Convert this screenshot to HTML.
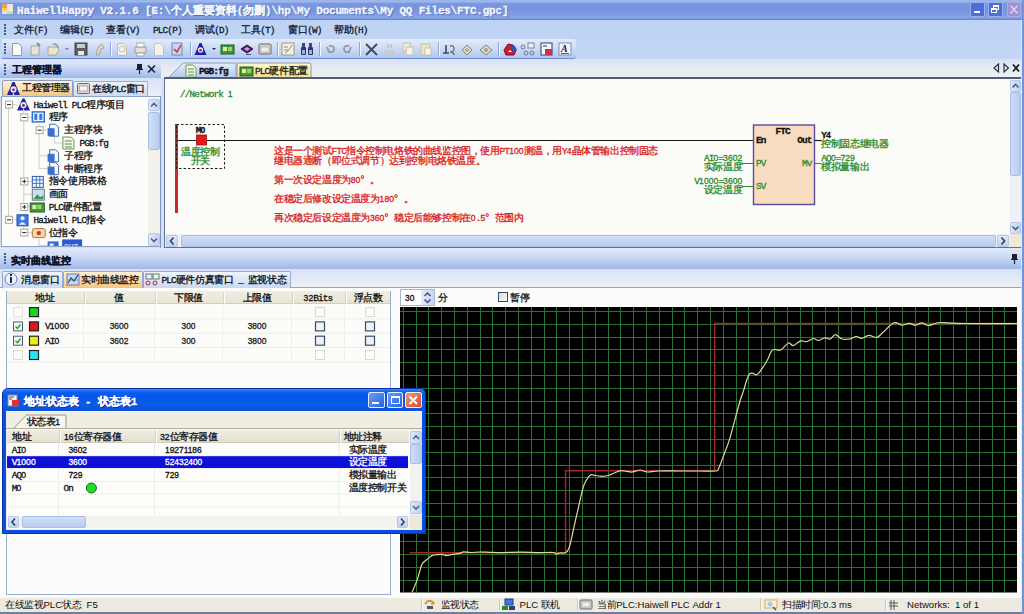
<!DOCTYPE html><html><head><meta charset="utf-8"><style>
*{margin:0;padding:0;box-sizing:border-box}
html,body{width:1024px;height:614px;overflow:hidden;background:#fbfbf8;font-family:"Liberation Sans",sans-serif;position:relative}
body>div, .abs{position:absolute}
.t{white-space:nowrap;-webkit-text-stroke:0.3px currentColor}
.a{font-family:"Liberation Mono",monospace;font-size:9.4px;letter-spacing:-0.84px}
.ab{font-family:"Liberation Mono",monospace;font-size:9.4px;letter-spacing:-0.84px;font-weight:bold}
.tt{font-family:"Liberation Mono",monospace;font-size:11px;font-weight:bold;letter-spacing:-0.2px}
.s{font-family:"Liberation Sans",sans-serif;font-size:9.6px;letter-spacing:0}
.d{font-family:"Liberation Sans",sans-serif;font-size:8.6px;letter-spacing:0.02px}
.n{font-family:"Liberation Sans",sans-serif;font-size:8.4px;letter-spacing:0}
svg{position:absolute;left:0;top:0}
</style></head><body><div style="left:0px;top:0px;width:1024px;height:20px;background:linear-gradient(#9cb5ea 0,#9cb5ea 2px,#7a98e0 3.5px,#7593df 9px,#7e9de3 15px,#88a6e8 18px,#6a88cc 19px,#6a88cc 20px)"></div>
<svg width="1024" height="20" style="left:0;top:0"><rect x="2" y="4" width="5" height="4" fill="#f0a050"/><rect x="7" y="4" width="6" height="4" fill="#e8e8f0"/><rect x="2" y="8" width="5" height="3" fill="#f8d070"/><rect x="7" y="8" width="6" height="3" fill="#f0f0c0"/><rect x="2" y="11" width="5" height="3" fill="#e0e0f0"/><rect x="7" y="11" width="6" height="3" fill="#c8e0a0"/></svg>
<div class="t" style="left:17px;top:2.0px;line-height:16px;height:16px;font-size:11px;color:#f4f6fc;font-weight:bold;text-shadow:1px 1px 0 #5570b8;"><span class="tt">HaiwellHappy&nbsp;V2.1.6&nbsp;[E:\</span>个人重要资料<span class="tt">(</span>勿删<span class="tt">)\hp\My&nbsp;Documents\My&nbsp;QQ&nbsp;Files\FTC.gpc]</span></div>
<div style="left:970px;top:2px;width:15px;height:15px;background:#4a6fd6;border:1px solid #9ab0ec;border-radius:2px"></div>
<div style="left:974px;top:11px;width:6px;height:2px;background:#fff"></div>
<div style="left:988px;top:2px;width:15px;height:15px;background:#4a6fd6;border:1px solid #9ab0ec;border-radius:2px"></div>
<div style="left:993px;top:5px;width:6px;height:5px;border:1px solid #fff;border-top-width:2px"></div>
<div style="left:991px;top:8px;width:6px;height:5px;border:1px solid #fff;border-top-width:2px;background:#4a6fd6"></div>
<div style="left:1007px;top:2px;width:14px;height:15px;background:#9d93d4;border:1px solid #b0a8e0;border-radius:2px"></div>
<svg width="14" height="15" style="left:1007px;top:2px"><path d="M3.5 3.5 L10.5 11.5 M10.5 3.5 L3.5 11.5" stroke="#d8d0f0" stroke-width="1.6"/></svg>
<div style="left:1021px;top:20px;width:1px;height:592px;background:#dceafa"></div>
<div style="left:1022px;top:0px;width:2px;height:614px;background:#7094da"></div>
<div style="left:0px;top:20px;width:1021px;height:39px;background:linear-gradient(#bdd2f5,#c0d4f4 20px,#c4d6f4 39px)"></div>
<div style="left:4px;top:24px;width:2px;height:2px;background:#3b5a9c"></div>
<div style="left:4px;top:27px;width:2px;height:2px;background:#3b5a9c"></div>
<div style="left:4px;top:30px;width:2px;height:2px;background:#3b5a9c"></div>
<div style="left:4px;top:33px;width:2px;height:2px;background:#3b5a9c"></div>
<div class="t" style="left:14px;top:22.5px;line-height:14px;height:14px;font-size:10px;color:#101830;letter-spacing:-0.4px;">文件<span class="a">(F)</span></div>
<div class="t" style="left:60px;top:22.5px;line-height:14px;height:14px;font-size:10px;color:#101830;letter-spacing:-0.4px;">编辑<span class="a">(E)</span></div>
<div class="t" style="left:106px;top:22.5px;line-height:14px;height:14px;font-size:10px;color:#101830;letter-spacing:-0.4px;">查看<span class="a">(V)</span></div>
<div class="t" style="left:153px;top:22.5px;line-height:14px;height:14px;font-size:10px;color:#101830;letter-spacing:-0.4px;"><span class="a">PLC(P)</span></div>
<div class="t" style="left:195px;top:22.5px;line-height:14px;height:14px;font-size:10px;color:#101830;letter-spacing:-0.4px;">调试<span class="a">(D)</span></div>
<div class="t" style="left:241px;top:22.5px;line-height:14px;height:14px;font-size:10px;color:#101830;letter-spacing:-0.4px;">工具<span class="a">(T)</span></div>
<div class="t" style="left:288px;top:22.5px;line-height:14px;height:14px;font-size:10px;color:#101830;letter-spacing:-0.4px;">窗口<span class="a">(W)</span></div>
<div class="t" style="left:334px;top:22.5px;line-height:14px;height:14px;font-size:10px;color:#101830;letter-spacing:-0.4px;">帮助<span class="a">(H)</span></div>
<div style="left:2px;top:39px;width:574px;height:20px;background:linear-gradient(#e3ecfb,#cfdcf6 45%,#b1c8ef 100%);border-radius:0 3px 3px 0;border-bottom:1px solid #6f8cd0"></div>
<div style="left:4px;top:43px;width:2px;height:2px;background:#3b5a9c"></div>
<div style="left:4px;top:46px;width:2px;height:2px;background:#3b5a9c"></div>
<div style="left:4px;top:49px;width:2px;height:2px;background:#3b5a9c"></div>
<div style="left:4px;top:52px;width:2px;height:2px;background:#3b5a9c"></div>
<svg width="1024" height="614"><path d="M12.5 43.5 h6 l3 3 v9 h-9 z" fill="#fbfbf7" stroke="#9a9a9a" stroke-width="1"/><rect x="31" y="46" width="8" height="9" fill="#e8e4d8" stroke="#a8a49a"/><path d="M37 43 l3 3" stroke="#8a8a8a" stroke-width="2"/><path d="M48 47 h9 l2 3 l-3 5 h-8 z" fill="#ece6d0" stroke="#aaa595"/><path d="M53 44 q5 0 5 4" stroke="#9a9a9a" fill="none" stroke-width="1.5"/><path d="M65 48 h4 l-2 2 z" fill="#707a90"/><rect x="75" y="43" width="12" height="12" fill="#5a5e62" stroke="#40444a"/><rect x="77" y="44" width="8" height="4" fill="#c8ccd0"/><rect x="78" y="51" width="6" height="4" fill="#e8e8e8"/><path d="M96 55 l2 -8 l4 -3 l2 4 l-3 1 l-2 6 z" fill="#ddd8c8" stroke="#a8a496"/><rect x="110" y="42" width="1" height="14" fill="#8ea6d6"/><rect x="111" y="42" width="1" height="14" fill="#f4f8ff"/><path d="M117.5 43.5 h6 l3 3 v9 h-9 z" fill="#f2f0e8" stroke="#c0bdb0" stroke-width="1"/><circle cx="122" cy="49" r="3" fill="none" stroke="#c8c4b8"/><rect x="135" y="47" width="11" height="6" rx="1" fill="#e6e2d8" stroke="#9a968c"/><rect x="137" y="43" width="7" height="4" fill="#fff" stroke="#aaa"/><rect x="137" y="53" width="7" height="3" fill="#fff" stroke="#aaa"/><path d="M154.5 43.5 h6 l3 3 v9 h-9 z" fill="#f4f2ea" stroke="#c8c4b8" stroke-width="1"/><rect x="172" y="43" width="10" height="12" fill="#c8d4ec" stroke="#7086b8"/><path d="M174 49 l3 3 l4 -7" stroke="#d03040" stroke-width="1.5" fill="none"/><rect x="190" y="42" width="1" height="14" fill="#8ea6d6"/><rect x="191" y="42" width="1" height="14" fill="#f4f8ff"/><path d="M194.5 55 L199.5 43 L201.5 43 L206.5 55 Z" fill="#2020b0"/><ellipse cx="200.5" cy="50" rx="2.6" ry="2.8" fill="#e8e8f8"/><circle cx="200.5" cy="50.3" r="1.2" fill="#a01840"/><path d="M212 48 h4 l-2 2 z" fill="#1a2a50"/><rect x="221" y="45" width="13" height="9" fill="#3c9a3c" stroke="#205a20"/><rect x="223" y="47" width="4" height="4" fill="#d8f0a0"/><rect x="228" y="47" width="4" height="4" fill="#a0d060"/><path d="M241 49 l6 -4 l6 4 l-6 4 z" fill="#502070" stroke="#301040"/><path d="M244 49 l3 -2 l3 2 l-3 2z" fill="#d0a0e0"/><rect x="246" y="54" width="5" height="1" fill="#405080"/><rect x="259" y="44" width="12" height="10" rx="1" fill="#d8d4cc" stroke="#6a6a6a"/><rect x="261" y="47" width="8" height="5" fill="#f0f0f0" stroke="#9a9a9a" stroke-width=".6"/><rect x="277" y="42" width="1" height="14" fill="#8ea6d6"/><rect x="278" y="42" width="1" height="14" fill="#f4f8ff"/><rect x="282" y="43" width="12" height="12" fill="#f4f0e4" stroke="#a09880"/><path d="M284 47 h4 M284 50 h4 M285 53 l3 -2 l4 -6" stroke="#a08870" stroke-width="1" fill="none"/><rect x="301" y="47" width="5" height="8" rx="1" fill="#2a3a70"/><rect x="308" y="47" width="5" height="8" rx="1" fill="#2a3a70"/><rect x="302" y="43" width="3" height="4" fill="#3a4a80"/><rect x="309" y="43" width="3" height="4" fill="#3a4a80"/><rect x="302" y="50" width="3" height="4" fill="#a0b0e0"/><rect x="309" y="50" width="3" height="4" fill="#a0b0e0"/><rect x="319" y="42" width="1" height="14" fill="#8ea6d6"/><rect x="320" y="42" width="1" height="14" fill="#f4f8ff"/><path d="M327 47 l2 5 q5 1 5 -3 q0 -4 -5 -3" stroke="#9098a8" stroke-width="1.8" fill="none"/><path d="M351 47 l-2 5 q-5 1 -5 -3 q0 -4 5 -3" stroke="#9098a8" stroke-width="1.8" fill="none"/><rect x="359" y="42" width="1" height="14" fill="#8ea6d6"/><rect x="360" y="42" width="1" height="14" fill="#f4f8ff"/><path d="M366 44 l11 11 M377 44 l-11 11" stroke="#3a4a5a" stroke-width="1.8"/><path d="M388 44 v4 M391 44 v4" stroke="#b0b4b8"/><rect x="385" y="50" width="9" height="5" fill="#c8ccd0"/><rect x="403" y="43" width="7" height="8" fill="#f0ece0" stroke="#c8c0a8"/><rect x="406" y="47" width="7" height="8" fill="#f6f2e6" stroke="#c8c0a8"/><rect x="421" y="44" width="9" height="11" fill="#ece4cc" stroke="#c8c0a8"/><rect x="425" y="48" width="6" height="7" fill="#f8f6ee" stroke="#c8c0a8"/><rect x="438" y="42" width="1" height="14" fill="#8ea6d6"/><rect x="439" y="42" width="1" height="14" fill="#f4f8ff"/><path d="M443 53 h6 M446 45 v8" stroke="#404858" stroke-width="1.6"/><path d="M450 46 q4 -1 4 3 q0 3 -4 3 q4 0 4 3" stroke="#707868" fill="none" stroke-width="1.4"/><path d="M462 50 l5 -5 l5 5 l-5 5 z" fill="#dcd8c8" stroke="#8a8678"/><circle cx="467" cy="50" r="2" fill="#b8b0a0"/><path d="M480 50 l6 -5 l6 5 l-6 5 z" fill="#dcd8c8" stroke="#8a8678"/><circle cx="486" cy="50" r="2" fill="#a8a090"/><rect x="498" y="42" width="1" height="14" fill="#8ea6d6"/><rect x="499" y="42" width="1" height="14" fill="#f4f8ff"/><path d="M504 50 l4 -6 l5 1 l3 5 l-2 5 h-8 z" fill="#c02030" stroke="#801020"/><path d="M510 45 l5 1 l2 4 l-4 2 z" fill="#3050b0"/><path d="M508 52 l2 -2 l2 2 z" fill="#fff"/><rect x="528" y="43" width="6" height="5" fill="#e8eef8" stroke="#7a8aa0"/><circle cx="523" cy="47" r="2" fill="none" stroke="#6a7a90"/><circle cx="526" cy="53" r="2" fill="none" stroke="#6a7a90"/><circle cx="532" cy="53" r="2" fill="none" stroke="#6a7a90"/><rect x="541" y="43" width="11" height="12" fill="#f8f8fc" stroke="#2a3a70"/><rect x="545" y="49" width="7" height="6" fill="#d03040"/><path d="M543 46 h4" stroke="#203070"/><rect x="559" y="43" width="12" height="12" fill="#f4f6fc" stroke="#8090b0"/><text x="561" y="52" font-family="Liberation Serif" font-style="italic" font-weight="bold" font-size="10" fill="#102060">A</text><rect x="561" y="53" width="8" height="1" fill="#4a5a8a"/></svg>
<div style="left:0px;top:59px;width:1021px;height:555px;background:#d3e0f6"></div>
<div style="left:0px;top:60px;width:161px;height:18px;background:linear-gradient(#e0e9f9 0,#d2def7 30%,#b6caf0 70%,#9fb8ea 100%)"></div>
<div style="left:4px;top:64px;width:2px;height:2px;background:#3b5a9c"></div>
<div style="left:4px;top:67px;width:2px;height:2px;background:#3b5a9c"></div>
<div style="left:4px;top:70px;width:2px;height:2px;background:#3b5a9c"></div>
<div style="left:4px;top:73px;width:2px;height:2px;background:#3b5a9c"></div>
<div class="t" style="left:12px;top:62.5px;line-height:14px;height:14px;font-size:10px;color:#0c1428;font-weight:bold;">工程管理器</div>
<svg width="30" height="14" style="left:134px;top:62px"><path d="M3 2 h5 v5 h1 v1 h-7 v-1 h1 z" fill="#1a2030"/><path d="M5.5 8 v4" stroke="#1a2030" stroke-width="1.2"/><path d="M14 3.5 l7 7 M21 3.5 l-7 7" stroke="#1a2030" stroke-width="1.6"/></svg>
<div style="left:0px;top:78px;width:161px;height:19px;background:linear-gradient(#d6e2f6,#e6ecf6 60%,#eef1f5)"></div>
<div style="left:2px;top:80px;width:71px;height:16px;background:linear-gradient(#fdf2d8,#fbdca6 60%,#f5c47c);border:1px solid #8a9cc4;border-bottom:none;border-radius:2px 2px 0 0"></div>
<svg width="16" height="16" style="left:6px;top:81px"><path d="M1 14 L6.5 1 L8.5 1 L14 14 Z" fill="#2020a0"/><ellipse cx="7.5" cy="8.5" rx="3" ry="3.2" fill="#e8e8f8"/><circle cx="7.5" cy="8.8" r="1.3" fill="#6a1a6a"/><path d="M6.5 14 L7.5 11.5 L8.5 14 Z" fill="#e8e8f8"/></svg>
<div class="t" style="left:22px;top:81.0px;line-height:14px;height:14px;font-size:10px;color:#101010;letter-spacing:-0.4px;">工程管理器</div>
<div style="left:73px;top:81px;width:75px;height:15px;background:linear-gradient(#eef3fc,#ccdaf3);border:1px solid #9aaad0;border-bottom:none;border-radius:2px 2px 0 0"></div>
<svg width="14" height="12" style="left:77px;top:83px"><rect x=".5" y=".5" width="12" height="10" rx="1" fill="#dcd8d0" stroke="#6a6a6a"/><rect x="2.5" y="3" width="8" height="5" fill="#f4f4f4" stroke="#8a8a8a" stroke-width=".6"/></svg>
<div class="t" style="left:92px;top:81.5px;line-height:14px;height:14px;font-size:10px;color:#101010;letter-spacing:-0.4px;">在线<span class="a">PLC</span>窗口</div>
<div style="left:1px;top:96px;width:160px;height:151px;background:#fcfcfa;border:1px solid #8ea4cc"></div>
<div style="left:148px;top:98px;width:12px;height:148px;background:#f2f2ea"></div>
<div style="left:148px;top:99px;width:12px;height:12px;background:linear-gradient(90deg,#dfe7f8,#c6d4f1);border:1px solid #b8c8ec;border-radius:2px"></div>
<svg width="12" height="12" style="left:148px;top:99px"><path d="M3 7.5 l3 -3 l3 3" stroke="#4d6185" stroke-width="1.6" fill="none"/></svg>
<div style="left:148px;top:112px;width:12px;height:38px;background:linear-gradient(90deg,#d4e0f8,#b9cbef);border:1px solid #aabde8;border-radius:2px"></div>
<div style="left:148px;top:233px;width:12px;height:13px;background:linear-gradient(90deg,#dfe7f8,#c6d4f1);border:1px solid #b8c8ec;border-radius:2px"></div>
<svg width="12" height="12" style="left:148px;top:234px"><path d="M3 4.5 l3 3 l3 -3" stroke="#4d6185" stroke-width="1.6" fill="none"/></svg>
<div class="t" style="left:33.5px;top:97.6px;line-height:14px;height:14px;font-size:10px;color:#101010;letter-spacing:-0.4px;"><span class="a">Haiwell&nbsp;PLC</span>程序项目</div>
<div class="t" style="left:48.8px;top:110.39999999999999px;line-height:14px;height:14px;font-size:10px;color:#101010;letter-spacing:-0.4px;">程序</div>
<div class="t" style="left:64.1px;top:123.19999999999999px;line-height:14px;height:14px;font-size:10px;color:#101010;letter-spacing:-0.4px;">主程序块</div>
<div class="t" style="left:79.4px;top:136.0px;line-height:14px;height:14px;font-size:10px;color:#101010;letter-spacing:-0.4px;"><span class="a">PGB:fg</span></div>
<div class="t" style="left:64.1px;top:148.8px;line-height:14px;height:14px;font-size:10px;color:#101010;letter-spacing:-0.4px;">子程序</div>
<div class="t" style="left:64.1px;top:161.6px;line-height:14px;height:14px;font-size:10px;color:#101010;letter-spacing:-0.4px;">中断程序</div>
<div class="t" style="left:48.8px;top:174.4px;line-height:14px;height:14px;font-size:10px;color:#101010;letter-spacing:-0.4px;">指令使用表格</div>
<div class="t" style="left:48.8px;top:187.2px;line-height:14px;height:14px;font-size:10px;color:#101010;letter-spacing:-0.4px;">画面</div>
<div class="t" style="left:48.8px;top:200.0px;line-height:14px;height:14px;font-size:10px;color:#101010;letter-spacing:-0.4px;"><span class="a">PLC</span>硬件配置</div>
<div class="t" style="left:33.5px;top:212.8px;line-height:14px;height:14px;font-size:10px;color:#101010;letter-spacing:-0.4px;"><span class="a">Haiwell&nbsp;PLC</span>指令</div>
<div class="t" style="left:48.8px;top:225.6px;line-height:14px;height:14px;font-size:10px;color:#101010;letter-spacing:-0.4px;">位指令</div>
<svg width="147" height="150" style="left:0;top:96px"><g transform="translate(0,-96)"><path d="M8.5 104.6 V219.8 M23.8 111.0 V207.0 M39.1 123.8 V168.6 M54.4 136.6 V143.0 M23.8 226.2 V232.6 M39.1 239.0 V258.2 M8.5 104.6 H17.0 M23.8 117.4 H32.3 M39.1 130.2 H47.6 M54.4 143.0 H62.9 M39.1 155.8 H47.6 M39.1 168.6 H47.6 M23.8 181.4 H32.3 M23.8 194.2 H32.3 M23.8 207.0 H32.3 M8.5 219.8 H17.0 M23.8 232.6 H32.3 M39.1 245.4 H47.6" stroke="#cfcfc8" stroke-width="1" fill="none"/><rect x="5.5" y="101.1" width="7" height="7" fill="#fff" stroke="#a8a8a0"/><path d="M7.0 104.6 h4" stroke="#202020"/><path d="M17.0 110.6 L22.5 98.6 L24.5 98.6 L30.0 110.6 Z" fill="#2020a0"/><ellipse cx="23.5" cy="105.1" rx="3" ry="3.2" fill="#e8e8f8"/><circle cx="23.5" cy="105.4" r="1.3" fill="#6a1a6a"/><path d="M22.5 110.6 L23.5 108.1 L24.5 110.6 Z" fill="#e8e8f8"/><rect x="20.8" y="113.9" width="7" height="7" fill="#fff" stroke="#a8a8a0"/><path d="M22.3 117.4 h4" stroke="#202020"/><rect x="32.3" y="111.9" width="12" height="10" fill="#e8f0fc" stroke="#2a6ad0" stroke-width="1.4"/><rect x="34.3" y="113.9" width="3" height="6" fill="#3a7ae0"/><rect x="39.3" y="113.9" width="3" height="6" fill="#3a7ae0"/><rect x="36.1" y="126.7" width="7" height="7" fill="#fff" stroke="#a8a8a0"/><path d="M37.6 130.2 h4" stroke="#202020"/><path d="M49.6 124.2 h6 l3 3 v9 h-9 z" fill="#f4f8fe" stroke="#4a6ab0"/><rect x="47.6" y="128.2" width="7" height="8" fill="#3d6fd0"/><path d="M62.900000000000006 137.0 h8 l3 3 v9 h-11 z" fill="#f4f8ec" stroke="#6a9a4a"/><path d="M64.9 141.0 h7 M64.9 144.0 h7 M64.9 147.0 h7" stroke="#5a9040"/><path d="M49.6 149.8 h6 l3 3 v9 h-9 z" fill="#f4f8fe" stroke="#4a6ab0"/><rect x="47.6" y="153.8" width="7" height="8" fill="#3d6fd0"/><path d="M49.6 162.6 h6 l3 3 v9 h-9 z" fill="#f4f8fe" stroke="#4a6ab0"/><rect x="47.6" y="166.6" width="7" height="8" fill="#3d6fd0"/><rect x="20.8" y="177.9" width="7" height="7" fill="#fff" stroke="#a8a8a0"/><path d="M22.3 181.4 h4" stroke="#202020"/><path d="M24.3 179.4 v4" stroke="#202020"/><rect x="32.3" y="176.4" width="11" height="11" fill="#eef4ff" stroke="#3060b0"/><path d="M36.3 176.4 v11 M39.8 176.4 v11 M32.3 179.9 h11 M32.3 183.4 h11" stroke="#3060b0" stroke-width=".8"/><rect x="32.3" y="189.2" width="12" height="11" fill="#c8e0f0" stroke="#6a7a8a"/><path d="M33.3 199.2 l4 -5 l3 3 l3 -2 v4 z" fill="#3a9a4a"/><rect x="20.8" y="203.5" width="7" height="7" fill="#fff" stroke="#a8a8a0"/><path d="M22.3 207.0 h4" stroke="#202020"/><path d="M24.3 205.0 v4" stroke="#202020"/><rect x="30.299999999999997" y="203.0" width="14" height="9" fill="#4a9a3a" stroke="#205a20"/><rect x="32.3" y="205.0" width="4" height="4" fill="#d8f0a0"/><rect x="37.3" y="205.0" width="4" height="4" fill="#a0d060"/><rect x="5.5" y="216.3" width="7" height="7" fill="#fff" stroke="#a8a8a0"/><path d="M7.0 219.8 h4" stroke="#202020"/><rect x="17.0" y="214.8" width="11" height="11" fill="#3f7ee8" stroke="#2050a0"/><circle cx="22.5" cy="218.3" r="2" fill="#f0f4ff"/><path d="M19.0 224.8 q3.5 -5 7 0" fill="#f0f4ff"/><rect x="20.8" y="229.1" width="7" height="7" fill="#fff" stroke="#a8a8a0"/><path d="M22.3 232.6 h4" stroke="#202020"/><rect x="32.3" y="228.6" width="13" height="9" rx="2" fill="#f8d8b0" stroke="#c07030"/><circle cx="38.8" cy="233.1" r="2.2" fill="#c04020"/><rect x="47.6" y="241.4" width="11" height="10" fill="#3a6ad0"/><rect x="49.6" y="243.4" width="4" height="4" fill="#e0e8f8"/><rect x="62.099999999999994" y="239.4" width="20" height="12" fill="#2a5ad8"/><text x="64.1" y="248.9" font-family="Liberation Mono" font-size="8" fill="#fff">OUT</text></g></svg>
<div style="left:161px;top:59px;width:860px;height:19px;background:linear-gradient(#d4e1f6,#e6ebf3 45%,#eef0f2)"></div>
<div style="left:160px;top:96px;width:1px;height:152px;background:#7f93bb"></div>
<svg width="160" height="20" style="left:160px;top:59px"><defs><linearGradient id="tb1" x1="0" y1="0" x2="0" y2="1"><stop offset="0" stop-color="#e4ecfb"/><stop offset="1" stop-color="#b3c8ee"/></linearGradient><linearGradient id="tb2" x1="0" y1="0" x2="0" y2="1"><stop offset="0" stop-color="#fdf6d2"/><stop offset="1" stop-color="#f3dd94"/></linearGradient></defs><path d="M8 19 L22 5 Q23.5 4 25 4 L76 4 L76 19 Z" fill="url(#tb1)" stroke="#8aa0cc"/><path d="M77 19 L77 6 Q77 4 79 4 L149 4 Q151 4 151 6 L151 19 Z" fill="url(#tb2)" stroke="#8a96b0"/><path d="M26 6 h7 l3 3 v9 h-10 z" fill="#f4f8ec" stroke="#6a9a4a"/><path d="M28 10 h6 M28 13 h6 M28 16 h6" stroke="#4a8a3a"/><rect x="80" y="8" width="13" height="9" fill="#4a9a3a" stroke="#205a20"/><rect x="82" y="10" width="4" height="4" fill="#d8f0a0"/><rect x="87" y="10" width="4" height="4" fill="#a0d060"/></svg>
<div class="t" style="left:199px;top:63.5px;line-height:14px;height:14px;font-size:10px;color:#0a0a20;letter-spacing:-0.4px;"><span class="ab">PGB:fg</span></div>
<div class="t" style="left:255px;top:63.5px;line-height:14px;height:14px;font-size:10px;color:#202010;letter-spacing:-0.4px;"><span class="a">PLC</span>硬件配置</div>
<svg width="30" height="12" style="left:991px;top:62px"><path d="M7.5 2 L3 6 L7.5 10 Z" fill="none" stroke="#2a3040" stroke-width="1.2"/><path d="M13 2 L17.5 6 L13 10 Z" fill="none" stroke="#2a3040" stroke-width="1.2"/><path d="M22 2.5 l6 7 M28 2.5 l-6 7" stroke="#1a2030" stroke-width="1.8"/></svg>
<div style="left:164px;top:77px;width:857px;height:171px;background:#fbfbf8;border-top:2px solid #525e74;border-left:1px solid #5f7296;border-bottom:1px solid #5f7296"></div>
<div style="left:1010px;top:79px;width:11px;height:155px;background:#eef1f6"></div>
<div style="left:1010px;top:80px;width:11px;height:12px;background:linear-gradient(90deg,#dfe7f8,#c3d2f0);border:1px solid #b5c6ea;border-radius:2px"></div>
<svg width="11" height="12" style="left:1010px;top:80px"><path d="M2.5 7.5 l3 -3 l3 3" stroke="#4d6185" stroke-width="1.6" fill="none"/></svg>
<div style="left:1010px;top:92px;width:11px;height:84px;background:linear-gradient(90deg,#d0ddf6,#b6c9ee);border:1px solid #a9bde6;border-radius:2px"></div>
<div style="left:1010px;top:222px;width:11px;height:12px;background:linear-gradient(90deg,#dfe7f8,#c3d2f0);border:1px solid #b5c6ea;border-radius:2px"></div>
<svg width="11" height="12" style="left:1010px;top:222px"><path d="M2.5 4.5 l3 3 l3 -3" stroke="#4d6185" stroke-width="1.6" fill="none"/></svg>
<div style="left:165px;top:234px;width:845px;height:13px;background:#eef1f6"></div>
<div style="left:166px;top:235px;width:12px;height:12px;background:linear-gradient(#dfe7f8,#c3d2f0);border:1px solid #b5c6ea;border-radius:2px"></div>
<svg width="12" height="12" style="left:166px;top:235px"><path d="M7.5 2.5 l-3 3.5 l3 3.5" stroke="#2d4165" stroke-width="1.6" fill="none"/></svg>
<div style="left:181px;top:235px;width:815px;height:12px;background:linear-gradient(#d2def6,#b9cbee);border:1px solid #aabde6;border-radius:2px"></div>
<div style="left:997px;top:235px;width:12px;height:12px;background:linear-gradient(#dfe7f8,#c3d2f0);border:1px solid #b5c6ea;border-radius:2px"></div>
<svg width="12" height="12" style="left:997px;top:235px"><path d="M4.5 2.5 l3 3.5 l-3 3.5" stroke="#2d4165" stroke-width="1.6" fill="none"/></svg>
<div style="left:1010px;top:234px;width:11px;height:13px;background:#efe9d8"></div>
<div class="t" style="left:180px;top:86.5px;line-height:14px;height:14px;font-size:10px;color:#2f8a2f;letter-spacing:-0.4px;"><span class="a">//Network&nbsp;<span class="d">1</span></span></div>
<svg width="1024" height="250"><rect x="175" y="124" width="3" height="89" fill="#c42a2a"/><rect x="176.5" y="124.5" width="48" height="44" fill="none" stroke="#202020" stroke-dasharray="2.5 2"/><path d="M178 140.5 H753" stroke="#1a1a1a" stroke-width="1.2"/><rect x="196.5" y="135" width="10" height="10" fill="#e81818" stroke="#a01010" stroke-width=".8"/><rect x="753.5" y="125" width="61" height="79.5" fill="#f8dcc0" stroke="#5a4aa0" stroke-width="1.4"/><path d="M814.5 140.5 H821.5" stroke="#1a1a1a" stroke-width="1.2"/><path d="M814.5 163.5 H821.5 M742 163.5 H753 M742 186.5 H753" stroke="#2f8a2f" stroke-width="1.2"/></svg>
<div class="t" style="left:180.5px;top:122.5px;width:40px;text-align:center;line-height:14px;height:14px;font-size:10px;color:#101010;letter-spacing:-0.4px;"><span class="ab">M<span class="d">0</span></span></div>
<div class="t" style="left:170.5px;top:144.8px;width:60px;text-align:center;line-height:14px;height:14px;font-size:10px;color:#2a8a2a;letter-spacing:-0.4px;">温度控制</div>
<div class="t" style="left:170.5px;top:153.8px;width:60px;text-align:center;line-height:14px;height:14px;font-size:10px;color:#2a8a2a;letter-spacing:-0.4px;">开关</div>
<div class="t" style="left:274px;top:145.7px;line-height:10px;height:10px;font-size:10px;color:#d81c1c;letter-spacing:-0.4px;">这是一个测试<span class="a">FTC</span>指令控制电烙铁的曲线监控图，使用<span class="a">PT<span class="d">100</span></span>测温，用<span class="a">Y<span class="d">4</span></span>晶体管输出控制固态</div>
<div class="t" style="left:274px;top:155.5px;line-height:10px;height:10px;font-size:10px;color:#d81c1c;letter-spacing:-0.4px;">继电器通断（即位式调节）达到控制电烙铁温度。</div>
<div class="t" style="left:274px;top:174.0px;line-height:12px;height:12px;font-size:10px;color:#d81c1c;letter-spacing:-0.4px;">第一次设定温度为<span class="a"><span class="d">80</span></span><span style="display:inline-block;width:9.6px;letter-spacing:0">°</span>。</div>
<div class="t" style="left:274px;top:192.6px;line-height:12px;height:12px;font-size:10px;color:#d81c1c;letter-spacing:-0.4px;">在稳定后修改设定温度为<span class="a"><span class="d">180</span></span><span style="display:inline-block;width:9.6px;letter-spacing:0">°</span>。</div>
<div class="t" style="left:274px;top:212.0px;line-height:12px;height:12px;font-size:10px;color:#d81c1c;letter-spacing:-0.4px;">再次稳定后设定温度为<span class="a"><span class="d">360</span></span><span style="display:inline-block;width:9.6px;letter-spacing:0">°</span>稳定后能够控制在<span class="a"><span class="d">0</span>.<span class="d">5</span></span><span style="display:inline-block;width:9.6px;letter-spacing:0">°</span>范围内</div>
<div class="t" style="left:762.7px;top:126.4px;width:40px;text-align:center;line-height:10px;height:10px;font-size:10px;color:#101010;letter-spacing:-0.4px;"><span class="ab">FTC</span></div>
<div class="t" style="left:756px;top:135.0px;line-height:10px;height:10px;font-size:10px;color:#101010;letter-spacing:-0.4px;"><span class="ab">En</span></div>
<div class="t" style="left:781.5px;top:135.0px;width:30px;text-align:right;line-height:10px;height:10px;font-size:10px;color:#101010;letter-spacing:-0.4px;"><span class="ab">Out</span></div>
<div class="t" style="left:756px;top:157.6px;line-height:10px;height:10px;font-size:10px;color:#2a8a2a;letter-spacing:-0.4px;"><span class="a">PV</span></div>
<div class="t" style="left:781.5px;top:157.6px;width:30px;text-align:right;line-height:10px;height:10px;font-size:10px;color:#2a8a2a;letter-spacing:-0.4px;"><span class="a">Mv</span></div>
<div class="t" style="left:756px;top:180.8px;line-height:10px;height:10px;font-size:10px;color:#2a8a2a;letter-spacing:-0.4px;"><span class="a">SV</span></div>
<div class="t" style="left:821.3px;top:129.5px;line-height:10px;height:10px;font-size:10px;color:#101010;letter-spacing:-0.4px;"><span class="ab">Y<span class="d">4</span></span></div>
<div class="t" style="left:821.3px;top:138.7px;line-height:10px;height:10px;font-size:10px;color:#2a8a2a;letter-spacing:-0.4px;">控制固态继电器</div>
<div class="t" style="left:821.3px;top:152.7px;line-height:10px;height:10px;font-size:10px;color:#2a8a2a;letter-spacing:-0.4px;"><span class="a">AQ<span class="d">0</span>=<span class="d">729</span></span></div>
<div class="t" style="left:821.3px;top:161.7px;line-height:10px;height:10px;font-size:10px;color:#2a8a2a;letter-spacing:-0.4px;">模拟量输出</div>
<div class="t" style="left:682.3px;top:152.7px;width:60px;text-align:right;line-height:10px;height:10px;font-size:10px;color:#2a8a2a;letter-spacing:-0.4px;"><span class="a">AI<span class="d">0</span>=<span class="d">3602</span></span></div>
<div class="t" style="left:682.3px;top:161.7px;width:60px;text-align:right;line-height:10px;height:10px;font-size:10px;color:#2a8a2a;letter-spacing:-0.4px;">实际温度</div>
<div class="t" style="left:682.3px;top:176.0px;width:60px;text-align:right;line-height:10px;height:10px;font-size:10px;color:#2a8a2a;letter-spacing:-0.4px;"><span class="a">V<span class="d">1000</span>=<span class="d">3600</span></span></div>
<div class="t" style="left:682.3px;top:184.9px;width:60px;text-align:right;line-height:10px;height:10px;font-size:10px;color:#2a8a2a;letter-spacing:-0.4px;">设定温度</div>
<div style="left:0px;top:248px;width:1021px;height:21px;background:linear-gradient(#e0e9f9 0,#d2def7 30%,#b6caf0 70%,#9fb8ea 100%)"></div>
<div style="left:4px;top:253px;width:2px;height:2px;background:#3b5a9c"></div>
<div style="left:4px;top:256px;width:2px;height:2px;background:#3b5a9c"></div>
<div style="left:4px;top:259px;width:2px;height:2px;background:#3b5a9c"></div>
<div style="left:4px;top:262px;width:2px;height:2px;background:#3b5a9c"></div>
<div class="t" style="left:11px;top:253.5px;line-height:14px;height:14px;font-size:10px;color:#0c1428;font-weight:bold;">实时曲线监控</div>
<svg width="12" height="12" style="left:1009px;top:253px"><path d="M3 1 h5 v5 h1 v1 h-7 v-1 h1 z" fill="#1a2030"/><path d="M5.5 7 v4" stroke="#1a2030" stroke-width="1.2"/></svg>
<div style="left:0px;top:269px;width:1021px;height:19px;background:linear-gradient(#d6e2f6,#e6ecf6 60%,#eef1f5)"></div>
<div style="left:0px;top:287px;width:1021px;height:1px;background:#8ea4cc"></div>
<div style="left:2px;top:271px;width:61px;height:17px;background:linear-gradient(#f0f4fc,#c9d8f2);border:1px solid #97a9cf;border-bottom:none;border-radius:2px 2px 0 0"></div>
<div style="left:63px;top:271px;width:80px;height:17px;background:linear-gradient(#fdf1d6,#fbd9a2 60%,#f5c47e);border:1px solid #97a9cf;border-bottom:none;border-radius:2px 2px 0 0"></div>
<div style="left:143px;top:271px;width:148px;height:17px;background:linear-gradient(#f0f4fc,#c9d8f2);border:1px solid #97a9cf;border-bottom:none;border-radius:2px 2px 0 0"></div>
<svg width="300" height="18" style="left:0;top:271px"><circle cx="11" cy="8" r="6" fill="#eef2fa" stroke="#6a80b0"/><rect x="10" y="6" width="2" height="6" fill="#1a2a60"/><rect x="10" y="3" width="2" height="2" fill="#1a2a60"/><rect x="67" y="3" width="12" height="11" fill="#c8d8f0" stroke="#6a7aa0"/><path d="M68 12 l3 -5 l3 3 l4 -6" stroke="#1a3aa0" stroke-width="1.2" fill="none"/><path d="M68 9 h10" stroke="#40a040" stroke-width=".8"/><rect x="146" y="3" width="6" height="5" fill="#e8eef8" stroke="#7a6a90"/><rect x="153" y="3" width="6" height="5" fill="#e8eef8" stroke="#5a8a50"/><circle cx="148" cy="12" r="2" fill="none" stroke="#c02030"/><circle cx="155" cy="12" r="2" fill="none" stroke="#c02030"/></svg>
<div class="t" style="left:21px;top:272.5px;line-height:14px;height:14px;font-size:10px;color:#101010;letter-spacing:-0.4px;">消息窗口</div>
<div class="t" style="left:81px;top:272.5px;line-height:14px;height:14px;font-size:10px;color:#101010;letter-spacing:-0.4px;">实时曲线监控</div>
<div class="t" style="left:161.5px;top:272.5px;line-height:14px;height:14px;font-size:10px;color:#101010;letter-spacing:-0.4px;"><span class="a">PLC</span>硬件仿真窗口<span class="a">&nbsp;_&nbsp;</span>监视状态</div>
<div style="left:0px;top:288px;width:1021px;height:309px;background:#fcfcfa"></div>
<div style="left:6px;top:291px;width:385px;height:304px;background:#fcfcfa;border:1px solid #98acd2;border-top:none"></div>
<div style="left:7px;top:291px;width:383px;height:13px;background:linear-gradient(#f0eee2,#e8e5d6);border-bottom:1px solid #d2cfbf"></div>
<div style="left:83.5px;top:292px;width:1px;height:12px;background:#d8d4c4"></div>
<div style="left:84.5px;top:292px;width:1px;height:12px;background:#fffef8"></div>
<div style="left:154.5px;top:292px;width:1px;height:12px;background:#d8d4c4"></div>
<div style="left:155.5px;top:292px;width:1px;height:12px;background:#fffef8"></div>
<div style="left:222.5px;top:292px;width:1px;height:12px;background:#d8d4c4"></div>
<div style="left:223.5px;top:292px;width:1px;height:12px;background:#fffef8"></div>
<div style="left:291.5px;top:292px;width:1px;height:12px;background:#d8d4c4"></div>
<div style="left:292.5px;top:292px;width:1px;height:12px;background:#fffef8"></div>
<div style="left:344.5px;top:292px;width:1px;height:12px;background:#d8d4c4"></div>
<div style="left:345.5px;top:292px;width:1px;height:12px;background:#fffef8"></div>
<div class="t" style="left:10.0px;top:292.3px;width:70px;text-align:center;line-height:12px;height:12px;font-size:10px;color:#101010;letter-spacing:-0.4px;">地址</div>
<div class="t" style="left:84.0px;top:292.3px;width:70px;text-align:center;line-height:12px;height:12px;font-size:10px;color:#101010;letter-spacing:-0.4px;">值</div>
<div class="t" style="left:153.5px;top:292.3px;width:70px;text-align:center;line-height:12px;height:12px;font-size:10px;color:#101010;letter-spacing:-0.4px;">下限值</div>
<div class="t" style="left:222.0px;top:292.3px;width:70px;text-align:center;line-height:12px;height:12px;font-size:10px;color:#101010;letter-spacing:-0.4px;">上限值</div>
<div class="t" style="left:283.0px;top:292.3px;width:70px;text-align:center;line-height:12px;height:12px;font-size:10px;color:#101010;letter-spacing:-0.4px;"><span class="a"><span class="d">32</span>Bits</span></div>
<div class="t" style="left:333.0px;top:292.3px;width:70px;text-align:center;line-height:12px;height:12px;font-size:10px;color:#101010;letter-spacing:-0.4px;">浮点数</div>
<svg width="400" height="370" style="left:0;top:0"><path d="M7 318.9 H390" stroke="#eeeee6"/><path d="M7 333.2 H390" stroke="#eeeee6"/><path d="M7 347.6 H390" stroke="#eeeee6"/><path d="M7 361.9 H390" stroke="#eeeee6"/><path d="M83.5 305 V362" stroke="#efefe8"/><path d="M154.5 305 V362" stroke="#efefe8"/><path d="M222.5 305 V362" stroke="#efefe8"/><path d="M291.5 305 V362" stroke="#efefe8"/><path d="M344.5 305 V362" stroke="#efefe8"/><rect x="13.5" y="307.6" width="9" height="9" fill="#fdfdfb" stroke="#deded6"/><rect x="315.5" y="307.6" width="9" height="9" fill="#fdfdfb" stroke="#d8d8d0"/><rect x="365.5" y="307.6" width="9" height="9" fill="#fdfdfb" stroke="#d8d8d0"/><rect x="29.5" y="307.6" width="9" height="9" fill="#18d818" stroke="#202020" stroke-width="1.2"/><rect x="13.5" y="321.9" width="9" height="9" fill="#f4f4f0" stroke="#4a607a"/><path d="M15.5 326.4 l2 2 l3 -4" stroke="#21a121" stroke-width="1.4" fill="none"/><rect x="315.5" y="321.9" width="9" height="9" fill="#eef2f8" stroke="#3a4a60" stroke-width="1.2"/><rect x="365.5" y="321.9" width="9" height="9" fill="#eef2f8" stroke="#3a4a60" stroke-width="1.2"/><rect x="29.5" y="321.9" width="9" height="9" fill="#e01414" stroke="#202020" stroke-width="1.2"/><rect x="13.5" y="336.2" width="9" height="9" fill="#f4f4f0" stroke="#4a607a"/><path d="M15.5 340.7 l2 2 l3 -4" stroke="#21a121" stroke-width="1.4" fill="none"/><rect x="315.5" y="336.2" width="9" height="9" fill="#eef2f8" stroke="#3a4a60" stroke-width="1.2"/><rect x="365.5" y="336.2" width="9" height="9" fill="#eef2f8" stroke="#3a4a60" stroke-width="1.2"/><rect x="29.5" y="336.2" width="9" height="9" fill="#f0f010" stroke="#202020" stroke-width="1.2"/><rect x="13.5" y="350.5" width="9" height="9" fill="#fdfdfb" stroke="#deded6"/><rect x="315.5" y="350.5" width="9" height="9" fill="#fdfdfb" stroke="#d8d8d0"/><rect x="365.5" y="350.5" width="9" height="9" fill="#fdfdfb" stroke="#d8d8d0"/><rect x="29.5" y="350.5" width="9" height="9" fill="#28e4f0" stroke="#202020" stroke-width="1.2"/></svg>
<div class="t" style="left:45px;top:320.4px;line-height:12px;height:12px;font-size:10px;color:#101010;letter-spacing:-0.4px;"><span class="a">V<span class="d">1000</span></span></div>
<div class="t" style="left:94.0px;top:320.4px;width:50px;text-align:center;line-height:12px;height:12px;font-size:9px;color:#202020;"><span class="n">3600</span></div>
<div class="t" style="left:163.5px;top:320.4px;width:50px;text-align:center;line-height:12px;height:12px;font-size:9px;color:#202020;"><span class="n">300</span></div>
<div class="t" style="left:232.0px;top:320.4px;width:50px;text-align:center;line-height:12px;height:12px;font-size:9px;color:#202020;"><span class="n">3800</span></div>
<div class="t" style="left:45px;top:334.7px;line-height:12px;height:12px;font-size:10px;color:#101010;letter-spacing:-0.4px;"><span class="a">AI<span class="d">0</span></span></div>
<div class="t" style="left:94.0px;top:334.7px;width:50px;text-align:center;line-height:12px;height:12px;font-size:9px;color:#202020;"><span class="n">3602</span></div>
<div class="t" style="left:163.5px;top:334.7px;width:50px;text-align:center;line-height:12px;height:12px;font-size:9px;color:#202020;"><span class="n">300</span></div>
<div class="t" style="left:232.0px;top:334.7px;width:50px;text-align:center;line-height:12px;height:12px;font-size:9px;color:#202020;"><span class="n">3800</span></div>
<div style="left:400px;top:289px;width:35px;height:17px;background:#fff;border:1px solid #a6b8da"></div>
<div class="t" style="left:405px;top:291.5px;line-height:12px;height:12px;font-size:9px;color:#101010;"><span class="n">30</span></div>
<div style="left:421px;top:290px;width:13px;height:15px;background:linear-gradient(90deg,#e4ecfa,#c8d6f2)"></div>
<svg width="13" height="15" style="left:421px;top:290px"><path d="M3.5 6 l3 -3 l3 3" stroke="#3d5185" stroke-width="1.5" fill="none"/><path d="M3.5 9.5 l3 3 l3 -3" stroke="#3d5185" stroke-width="1.5" fill="none"/></svg>
<div class="t" style="left:438px;top:290.5px;line-height:14px;height:14px;font-size:10px;color:#101010;letter-spacing:-0.4px;">分</div>
<div style="left:498px;top:292px;width:10px;height:10px;background:linear-gradient(135deg,#dcdcd6,#fafaf8);border:1px solid #2a4a7a"></div>
<div class="t" style="left:510px;top:290.5px;line-height:14px;height:14px;font-size:10px;color:#101010;letter-spacing:-0.4px;">暂停</div>
<svg width="1024" height="614"><rect x="400" y="307" width="617" height="285.5" fill="#000"/><path d="M403.5 307 V592.5 M416.5 307 V592.5 M428.5 307 V592.5 M441.5 307 V592.5 M454.5 307 V592.5 M467.5 307 V592.5 M480.5 307 V592.5 M492.5 307 V592.5 M505.5 307 V592.5 M518.5 307 V592.5 M531.5 307 V592.5 M544.5 307 V592.5 M556.5 307 V592.5 M569.5 307 V592.5 M582.5 307 V592.5 M595.5 307 V592.5 M608.5 307 V592.5 M620.5 307 V592.5 M633.5 307 V592.5 M646.5 307 V592.5 M659.5 307 V592.5 M672.5 307 V592.5 M684.5 307 V592.5 M697.5 307 V592.5 M710.5 307 V592.5 M723.5 307 V592.5 M736.5 307 V592.5 M748.5 307 V592.5 M761.5 307 V592.5 M774.5 307 V592.5 M787.5 307 V592.5 M800.5 307 V592.5 M812.5 307 V592.5 M825.5 307 V592.5 M838.5 307 V592.5 M851.5 307 V592.5 M864.5 307 V592.5 M876.5 307 V592.5 M889.5 307 V592.5 M902.5 307 V592.5 M915.5 307 V592.5 M928.5 307 V592.5 M940.5 307 V592.5 M953.5 307 V592.5 M966.5 307 V592.5 M979.5 307 V592.5 M992.5 307 V592.5 M1004.5 307 V592.5 M400 311.5 H1017 M400 324.5 H1017 M400 337.5 H1017 M400 349.5 H1017 M400 362.5 H1017 M400 375.5 H1017 M400 388.5 H1017 M400 401.5 H1017 M400 413.5 H1017 M400 426.5 H1017 M400 439.5 H1017 M400 452.5 H1017 M400 465.5 H1017 M400 477.5 H1017 M400 490.5 H1017 M400 503.5 H1017 M400 516.5 H1017 M400 529.5 H1017 M400 541.5 H1017 M400 554.5 H1017 M400 567.5 H1017 M400 580.5 H1017" stroke="#2a7030" stroke-width="1"/><path d="M409.5 552.8 H565.5 V470.8 H714.7 V323.5 H1017" stroke="#a02828" stroke-width="1.4" fill="none"/><path d="M412,592.1 C412.9,590.1 415.6,584.4 417.1,580.1 C418.6,575.8 420.2,569.4 421.1,566.5 C422.1,563.6 421.8,564.2 422.8,563 C423.9,561.8 425.9,560.3 427.4,559.1 C428.9,557.9 430.2,556.4 431.9,555.6 C433.6,554.9 435.7,554.8 437.6,554.6 C439.5,554.4 441.8,554.4 443.3,554.6 C444.8,554.8 445.4,555.6 446.7,555.6 C448.0,555.6 449.2,555.0 451.3,554.6 C453.4,554.2 457.2,553.9 459.3,553.4 C461.4,552.9 461.9,552.0 463.8,551.9 C465.7,551.8 468.0,552.5 470.7,552.5 C473.4,552.5 476.8,552.0 480,552 C483.2,552.0 486.7,552.2 490,552.3 C493.3,552.4 495.0,552.6 500,552.6 C505.0,552.6 513.3,552.2 520,552.2 C526.7,552.2 534.4,552.6 540,552.6 C545.6,552.6 550.9,552.3 553.6,552.5 C556.3,552.7 554.9,553.9 556,554 C557.1,554.1 558.4,553.2 560,553 C561.6,552.8 564.0,553.5 565.5,552.8 C567.0,552.1 567.8,551.0 568.7,548.8 C569.7,546.6 570.2,543.8 571.2,539.8 C572.2,535.8 573.2,530.5 574.4,525.1 C575.6,519.7 577.3,512.6 578.5,507.2 C579.7,501.8 580.8,496.4 581.8,492.6 C582.8,488.8 583.1,487.0 584.2,484.4 C585.3,481.8 587.1,478.7 588.3,477.1 C589.5,475.5 590.4,475.0 591.5,474.7 C592.6,474.4 593.0,475.2 594.8,475.5 C596.6,475.8 599.8,476.3 602.1,476.3 C604.4,476.3 606.6,476.1 608.6,475.5 C610.6,474.9 612.3,473.8 614.3,473 C616.3,472.2 618.8,470.9 620.8,470.6 C622.8,470.3 624.6,471.2 626.5,471.4 C628.4,471.6 629.8,472.2 632,472 C634.2,471.8 637.4,470.0 640,470 C642.6,470.0 644.7,471.8 647.7,472 C650.7,472.2 652.6,471.2 658,471 C663.4,470.8 673.0,471.0 680,471 C687.0,471.0 694.1,471.0 700,471 C705.9,471.0 712.5,471.4 715.6,471 C718.7,470.6 717.3,471.0 718.6,468.5 C719.9,466.0 721.7,460.5 723.5,455.8 C725.3,451.1 727.3,446.3 729.3,440.1 C731.2,433.9 733.4,425.1 735.2,418.6 C737.0,412.1 738.5,405.9 740,401 C741.5,396.1 742.9,392.9 744,389.3 C745.1,385.7 745.9,382.1 746.9,379.5 C747.9,376.9 748.8,374.7 749.8,373.7 C750.8,372.7 751.6,373.1 752.8,373.3 C753.9,373.5 755.4,375.1 756.7,374.7 C758.0,374.3 758.8,373.1 760.6,370.7 C762.4,368.2 765.6,363.3 767.4,360 C769.2,356.7 770.2,352.6 771.6,350.8 C773.0,349.1 774.0,349.6 775.5,349.5 C777.0,349.4 778.5,351.1 780.7,350 C782.9,348.9 786.4,343.7 788.5,343 C790.6,342.3 791.2,345.9 793.2,345.6 C795.2,345.3 798.0,341.8 800.3,341.1 C802.6,340.4 804.6,341.9 806.8,341.5 C809.0,341.1 811.3,338.7 813.3,338.5 C815.2,338.3 816.5,340.5 818.5,340.4 C820.5,340.3 823.0,338.0 825,337.8 C827.0,337.6 828.5,339.5 830.2,339 C831.9,338.5 833.4,334.6 835.4,334.6 C837.4,334.6 839.6,338.3 842,339 C844.4,339.7 847.3,339.4 849.7,339 C852.1,338.6 854.3,336.6 856.25,336.5 C858.2,336.4 859.5,338.5 861.6,338.3 C863.7,338.1 866.2,335.5 868.75,335.4 C871.3,335.2 874.4,337.9 876.8,337.4 C879.2,336.9 880.2,334.7 883.1,332.3 C886.0,329.9 890.8,324.0 893.9,322.8 C897.0,321.6 899.5,325.1 902,325.2 C904.5,325.3 907.0,323.4 909.2,323.4 C911.5,323.4 913.4,325.3 915.5,325.2 C917.6,325.1 919.7,322.8 921.8,322.9 C923.9,322.9 925.8,325.4 928,325.5 C930.2,325.6 933.1,324.0 935.2,323.5 C937.3,323.0 935.8,322.5 940.6,322.5 C945.4,322.5 951.3,323.3 964,323.5 C976.7,323.7 1008.2,323.5 1017,323.5" stroke="#dedc96" stroke-width="1.2" fill="none"/></svg>
<div style="left:2px;top:387.5px;width:424px;height:146px;background:#0b4ee0;border-radius:6px 6px 0 0;border:1px solid #0832a8"></div>
<div style="left:3px;top:388.5px;width:422px;height:22.5px;background:linear-gradient(#3a8af8 0,#0a5ef0 3px,#0556e8 8px,#0a5ce8 16px,#0b4fd8 22px);border-radius:5px 5px 0 0"></div>
<svg width="14" height="14" style="left:7px;top:394px"><rect x="1" y="1" width="9" height="11" fill="#f4f4f4" stroke="#8a8a8a"/><rect x="5" y="6" width="7" height="6" fill="#e03040"/><path d="M2 3 h5 M2 5 h3" stroke="#505050"/></svg>
<div class="t" style="left:23.5px;top:393.5px;line-height:14px;height:14px;font-size:11px;color:#ffffff;font-weight:bold;text-shadow:1px 1px 0 #0a2a90;">地址状态表<span class="tt">&nbsp;-&nbsp;</span>状态表<span class="tt">1</span></div>
<div style="left:368px;top:391.5px;width:16.5px;height:16.5px;background:linear-gradient(135deg,#6a9cf8,#2a62e0);border:1px solid #e8eefc;border-radius:2px"></div>
<div style="left:386.5px;top:391.5px;width:16.5px;height:16.5px;background:linear-gradient(135deg,#6a9cf8,#2a62e0);border:1px solid #e8eefc;border-radius:2px"></div>
<div style="left:372px;top:402px;width:7px;height:2px;background:#fff"></div>
<div style="left:390.5px;top:396px;width:9px;height:8px;border:1px solid #fff;border-top-width:2px"></div>
<div style="left:405px;top:391.5px;width:16.5px;height:16.5px;background:linear-gradient(135deg,#f09a7a,#d84a2a);border:1px solid #f4f0ee;border-radius:2px"></div>
<svg width="16" height="16" style="left:405px;top:391.5px"><path d="M4.5 4.5 l7.5 7.5 M12 4.5 l-7.5 7.5" stroke="#fff" stroke-width="1.8"/></svg>
<div style="left:6px;top:411px;width:416px;height:118.5px;background:#efede4"></div>
<div style="left:6px;top:411px;width:416px;height:1px;background:#fafaf6"></div>
<div style="left:6px;top:427.5px;width:416px;height:1px;background:#b0ac98"></div>
<svg width="70" height="18" style="left:6px;top:411px"><path d="M8 17 L20 4.5 Q21 4 22 4 L59 4 Q60 4 60 5 L60 17" fill="#f6f5ef" stroke="#9a9888"/></svg>
<div class="t" style="left:26.5px;top:414.5px;line-height:14px;height:14px;font-size:10px;color:#101010;letter-spacing:-0.4px;">状态表<span class="a"><span class="d">1</span></span></div>
<div style="left:7px;top:429px;width:403px;height:100px;background:#fdfdfb"></div>
<div style="left:7px;top:429.5px;width:402px;height:13.5px;background:linear-gradient(#efede2,#e4e1d2);border-bottom:1px solid #cfccbc"></div>
<div style="left:58.5px;top:430px;width:1px;height:12.5px;background:#cfccbc"></div>
<div style="left:59.5px;top:430px;width:1px;height:12.5px;background:#fffef8"></div>
<div style="left:154.5px;top:430px;width:1px;height:12.5px;background:#cfccbc"></div>
<div style="left:155.5px;top:430px;width:1px;height:12.5px;background:#fffef8"></div>
<div style="left:339px;top:430px;width:1px;height:12.5px;background:#cfccbc"></div>
<div style="left:340px;top:430px;width:1px;height:12.5px;background:#fffef8"></div>
<div class="t" style="left:12px;top:430.5px;line-height:12px;height:12px;font-size:10px;color:#101010;letter-spacing:-0.4px;">地址</div>
<div class="t" style="left:64px;top:430.5px;line-height:12px;height:12px;font-size:10px;color:#101010;letter-spacing:-0.4px;"><span class="a"><span class="d">16</span></span>位寄存器值</div>
<div class="t" style="left:160px;top:430.5px;line-height:12px;height:12px;font-size:10px;color:#101010;letter-spacing:-0.4px;"><span class="a"><span class="d">32</span></span>位寄存器值</div>
<div class="t" style="left:343.5px;top:430.5px;line-height:12px;height:12px;font-size:10px;color:#101010;letter-spacing:-0.4px;">地址注释</div>
<svg width="430" height="540"><path d="M7 455.8 H409" stroke="#efefe8"/><path d="M7 468.6 H409" stroke="#efefe8"/><path d="M7 481.4 H409" stroke="#efefe8"/><path d="M7 494.2 H409" stroke="#efefe8"/><path d="M7 507.0 H409" stroke="#efefe8"/><path d="M7 519.8 H409" stroke="#efefe8"/><path d="M58.5 443 V515" stroke="#ecece4"/><path d="M154.5 443 V515" stroke="#ecece4"/><path d="M339 443 V515" stroke="#ecece4"/><rect x="7" y="456.2" width="401" height="11.8" fill="#0c10d8"/><circle cx="91.4" cy="488" r="5" fill="#1ee01e" stroke="#106a10" stroke-width="1"/></svg>
<div class="t" style="left:11.7px;top:443.5px;line-height:12px;height:12px;font-size:10px;color:#101010;letter-spacing:-0.4px;"><span class="a">AI<span class="d">0</span></span></div>
<div class="t" style="left:68.4px;top:443.5px;line-height:12px;height:12px;font-size:9px;color:#101010;"><span class="n">3602</span></div>
<div class="t" style="left:165px;top:443.5px;line-height:12px;height:12px;font-size:9px;color:#101010;"><span class="n">19271186</span></div>
<div class="t" style="left:348.6px;top:443.5px;line-height:12px;height:12px;font-size:10px;color:#101010;letter-spacing:-0.4px;">实际温度</div>
<div class="t" style="left:11.7px;top:456.3px;line-height:12px;height:12px;font-size:10px;color:#ffffff;letter-spacing:-0.4px;"><span class="a">V<span class="d">1000</span></span></div>
<div class="t" style="left:68.4px;top:456.3px;line-height:12px;height:12px;font-size:9px;color:#ffffff;"><span class="n">3600</span></div>
<div class="t" style="left:165px;top:456.3px;line-height:12px;height:12px;font-size:9px;color:#ffffff;"><span class="n">52432400</span></div>
<div class="t" style="left:348.6px;top:456.3px;line-height:12px;height:12px;font-size:10px;color:#ffffff;letter-spacing:-0.4px;">设定温度</div>
<div class="t" style="left:11.7px;top:469.1px;line-height:12px;height:12px;font-size:10px;color:#101010;letter-spacing:-0.4px;"><span class="a">AQ<span class="d">0</span></span></div>
<div class="t" style="left:68.4px;top:469.1px;line-height:12px;height:12px;font-size:9px;color:#101010;"><span class="n">729</span></div>
<div class="t" style="left:165px;top:469.1px;line-height:12px;height:12px;font-size:9px;color:#101010;"><span class="n">729</span></div>
<div class="t" style="left:348.6px;top:469.1px;line-height:12px;height:12px;font-size:10px;color:#101010;letter-spacing:-0.4px;">模拟量输出</div>
<div class="t" style="left:11.7px;top:482.0px;line-height:12px;height:12px;font-size:10px;color:#101010;letter-spacing:-0.4px;"><span class="a">M<span class="d">0</span></span></div>
<div class="t" style="left:63.5px;top:482.0px;line-height:12px;height:12px;font-size:10px;color:#101010;letter-spacing:-0.4px;"><span class="a">On</span></div>
<div class="t" style="left:348.6px;top:482.0px;line-height:12px;height:12px;font-size:10px;color:#101010;letter-spacing:-0.4px;">温度控制开关</div>
<div style="left:409.5px;top:430px;width:12px;height:85px;background:#f3f3ee"></div>
<div style="left:409.5px;top:431px;width:12px;height:13px;background:linear-gradient(90deg,#dfe7f8,#c3d2f0);border:1px solid #b5c6ea;border-radius:2px"></div>
<svg width="12" height="13" style="left:409.5px;top:431px"><path d="M3 8 l3 -3 l3 3" stroke="#4d6185" stroke-width="1.6" fill="none"/></svg>
<div style="left:409.5px;top:444px;width:12px;height:20px;background:linear-gradient(90deg,#d0ddf6,#b6c9ee);border:1px solid #a9bde6;border-radius:2px"></div>
<div style="left:409.5px;top:501px;width:12px;height:13px;background:linear-gradient(90deg,#dfe7f8,#c3d2f0);border:1px solid #b5c6ea;border-radius:2px"></div>
<svg width="12" height="13" style="left:409.5px;top:501px"><path d="M3 5 l3 3 l3 -3" stroke="#4d6185" stroke-width="1.6" fill="none"/></svg>
<div style="left:7px;top:515.5px;width:402.5px;height:12.5px;background:#f3f3ee"></div>
<div style="left:8px;top:516px;width:11px;height:12px;background:linear-gradient(#dfe7f8,#c3d2f0);border:1px solid #b5c6ea;border-radius:2px"></div>
<svg width="11" height="12" style="left:8px;top:516px"><path d="M7 2.5 l-3 3.5 l3 3.5" stroke="#2d4165" stroke-width="1.6" fill="none"/></svg>
<div style="left:21.5px;top:516px;width:64px;height:12px;background:linear-gradient(#d2def6,#b9cbee);border:1px solid #aabde6;border-radius:2px"></div>
<div style="left:397px;top:516px;width:11px;height:12px;background:linear-gradient(#dfe7f8,#c3d2f0);border:1px solid #b5c6ea;border-radius:2px"></div>
<svg width="11" height="12" style="left:397px;top:516px"><path d="M4 2.5 l3 3.5 l-3 3.5" stroke="#2d4165" stroke-width="1.6" fill="none"/></svg>
<div style="left:409.5px;top:515px;width:12px;height:13.5px;background:#ece9d8"></div>
<div style="left:0px;top:597px;width:1021px;height:17px;background:#eceae1;border-top:1px solid #f8f8f4"></div>
<div style="left:0px;top:612px;width:1024px;height:2px;background:#6f7f9e"></div>
<div style="left:421px;top:599px;width:1px;height:11px;background:#c8c4b4"></div>
<div style="left:422px;top:599px;width:1px;height:11px;background:#fdfdfb"></div>
<div style="left:499px;top:599px;width:1px;height:11px;background:#c8c4b4"></div>
<div style="left:500px;top:599px;width:1px;height:11px;background:#fdfdfb"></div>
<div style="left:577px;top:599px;width:1px;height:11px;background:#c8c4b4"></div>
<div style="left:578px;top:599px;width:1px;height:11px;background:#fdfdfb"></div>
<div style="left:760px;top:599px;width:1px;height:11px;background:#c8c4b4"></div>
<div style="left:761px;top:599px;width:1px;height:11px;background:#fdfdfb"></div>
<div style="left:884.5px;top:599px;width:1px;height:11px;background:#c8c4b4"></div>
<div style="left:885.5px;top:599px;width:1px;height:11px;background:#fdfdfb"></div>
<div class="t" style="left:5px;top:598.8px;line-height:12px;height:12px;font-size:10px;color:#101010;letter-spacing:-0.4px;-webkit-text-stroke:0;">在线监视<span class="s">PLC</span>状态<span class="s">&nbsp;&nbsp;F5</span></div>
<div class="t" style="left:440.6px;top:598.8px;line-height:12px;height:12px;font-size:10px;color:#101010;letter-spacing:-0.4px;-webkit-text-stroke:0;">监视状态</div>
<div class="t" style="left:519.5px;top:598.8px;line-height:12px;height:12px;font-size:10px;color:#101010;letter-spacing:-0.4px;-webkit-text-stroke:0;"><span class="s">PLC&nbsp;</span>联机</div>
<div class="t" style="left:597px;top:598.8px;line-height:12px;height:12px;font-size:10px;color:#101010;letter-spacing:-0.4px;-webkit-text-stroke:0;">当前<span class="s">PLC:Haiwell&nbsp;PLC&nbsp;Addr&nbsp;1</span></div>
<div class="t" style="left:782px;top:598.8px;line-height:12px;height:12px;font-size:10px;color:#101010;letter-spacing:-0.4px;-webkit-text-stroke:0;">扫描时间<span class="s">:0.3&nbsp;ms</span></div>
<div class="t" style="left:907px;top:598.8px;line-height:12px;height:12px;font-size:10px;color:#101010;letter-spacing:-0.4px;-webkit-text-stroke:0;"><span class="s">Networks:&nbsp;&nbsp;1&nbsp;of&nbsp;1</span></div>
<svg width="1024" height="614"><path d="M425 604 q4 -6 9 -1" stroke="#c89a30" stroke-width="2" fill="none"/><path d="M432 601 l3 3 l-4 1z" fill="#c89a30"/><rect x="427" y="606" width="6" height="3" fill="#505860"/><rect x="505" y="599" width="8" height="6" fill="#3a7ae0" stroke="#1a3a80"/><rect x="502" y="606" width="6" height="4" fill="#2a8a2a"/><rect x="509" y="606" width="6" height="4" fill="#304070"/><rect x="580" y="600" width="12" height="9" rx="1" fill="#d8d4cc" stroke="#6a6a6a"/><rect x="582" y="602" width="8" height="5" fill="#f0f0f0" stroke="#9a9a9a" stroke-width=".6"/><rect x="765" y="600" width="12" height="8" fill="#f8f0d8" stroke="#d8b060"/><circle cx="770" cy="604" r="2.5" fill="#a8c8e8"/><path d="M773 607 l3 3" stroke="#6a4a20" stroke-width="1.4"/><path d="M891 600 v10 M894 600 v10 M889 603 h9 M889 606 h9" stroke="#5a5a5a" stroke-width="1"/></svg>
<div style="left:1021px;top:20px;width:1px;height:592px;background:#dceafa"></div><div style="left:1022px;top:0;width:2px;height:614px;background:#7094da"></div></body></html>
